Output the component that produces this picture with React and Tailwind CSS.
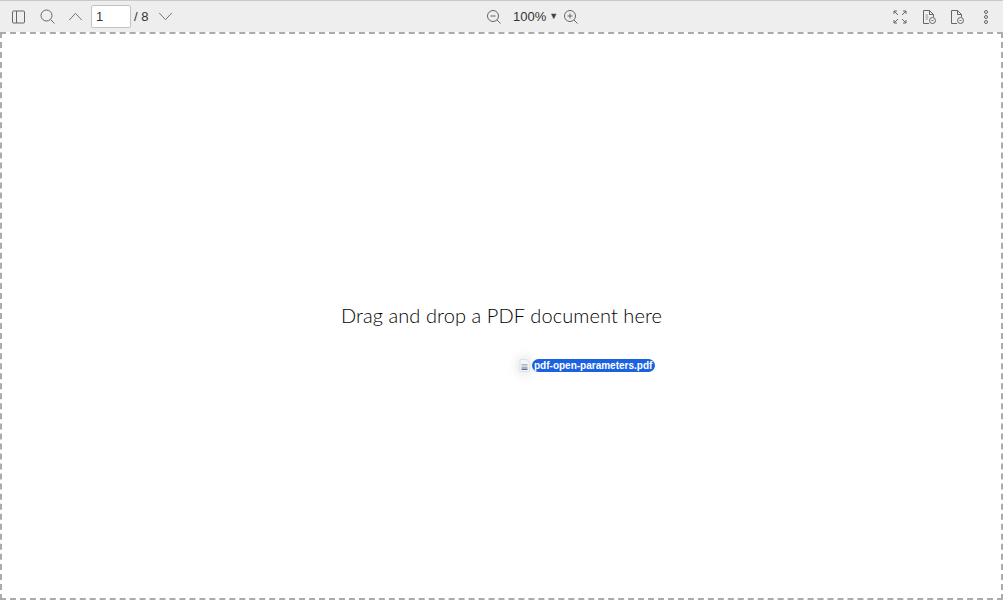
import React from 'react';

const sans = "font-['Liberation_Sans',sans-serif]";

const Toolbar = () => (
  <div className={`h-[32px] shrink-0 flex items-center bg-[#eeeeee] border-t border-[#c9c9c9] text-[#333333] text-[13px] ${sans}`}>
    <div className="flex-1 flex items-center pl-[12px]">
      <svg viewBox="0 0 14 14" fill="none" stroke="#666666" className="w-[14px] h-[14px]">
        <rect x="0.5" y="1" width="12" height="12" rx="1" />
        <path d="M4.5 1v12" />
      </svg>
      <svg viewBox="0 0 15 15" fill="none" stroke="#666666" className="w-[15px] h-[15px] ml-[14px]">
        <circle cx="6.5" cy="6.5" r="5.5" />
        <path d="M10.5 10.5l4 4" />
      </svg>
      <svg viewBox="0 0 16 10" fill="none" stroke="#666666" className="w-[15px] h-[9px] ml-[13px]">
        <path d="M1 9l7-7.5L15 9" />
      </svg>
      <div className="w-[40px] h-[23px] ml-[8px] bg-white border border-[#c4c4c4] rounded-[2px] flex items-center pl-[4px] text-[13px]">1</div>
      <span className="ml-[3px] text-[13px]">/ 8</span>
      <svg viewBox="0 0 16 10" fill="none" stroke="#666666" className="w-[15px] h-[9px] ml-[10px]">
        <path d="M1 1l7 7.5L15 1" />
      </svg>
    </div>

    <div className="flex items-center absolute left-[486px]">
      <svg viewBox="0 0 15 15" fill="none" stroke="#666666" className="w-[15px] h-[15px]">
        <circle cx="7" cy="7" r="5.5" />
        <path d="M4.5 7h5M11 11l3.5 3.5" />
      </svg>
      <span className="ml-[12px] text-[13px]">100%</span>
      <span className="ml-[3px] text-[9px] text-[#444444]">▼</span>
      <svg viewBox="0 0 15 15" fill="none" stroke="#666666" className="w-[15px] h-[15px] ml-[5px]">
        <circle cx="7" cy="7" r="5.5" />
        <path d="M4.5 7h5M7 4.5v5M11 11l3.5 3.5" />
      </svg>
    </div>

    <div className="flex items-center pr-[13px]">
      <svg viewBox="0 0 16 16" fill="none" stroke="#666666" className="w-[16px] h-[16px]">
        <path d="M2 2l4 4M2 2h3M2 2v3M14 2l-4 4M14 2h-3M14 2v3M2 14l4-4M2 14h3M2 14v-3M14 14l-4-4M14 14h-3M14 14v-3" />
      </svg>
      <svg viewBox="0 0 16 16" fill="none" stroke="#666666" className="w-[16px] h-[16px] ml-[13px]">
        <path d="M8 14.5H2.5v-13h6l4 4V8" />
        <path d="M8.5 1.5v4h4" />
        <path d="M4.5 6h2.5M4.5 8h3M4.5 10h2.5" stroke="#999999" />
        <circle cx="11.5" cy="11.5" r="3" />
        <path d="M10.5 11l1 1 1-1" />
      </svg>
      <svg viewBox="0 0 16 16" fill="none" stroke="#666666" className="w-[16px] h-[16px] ml-[12px]">
        <path d="M8 14.5H2.5v-13h6l4 4V8" />
        <path d="M8.5 1.5v4h4" />
        <circle cx="11.5" cy="11.5" r="3" />
        <path d="M10.5 12l1-1 1 1" />
      </svg>
      <svg viewBox="0 0 8 16" fill="none" stroke="#666666" className="w-[8px] h-[16px] ml-[17px]">
        <circle cx="4" cy="3" r="1.5" />
        <circle cx="4" cy="8" r="1.5" />
        <circle cx="4" cy="13" r="1.5" />
      </svg>
    </div>
  </div>
);

const DragGhost = () => (
  <div className={`absolute left-[519px] top-[359px] flex items-center ${sans}`}>
    <svg viewBox="0 0 11 13" className="w-[11px] h-[13px] drop-shadow-[0_0_6px_rgba(0,0,0,0.2)]">
      <path d="M1 .5h6.5l3 3v9H1z" fill="#f4f5f7" stroke="#d6d6d6" strokeWidth="0.6" />
      <path d="M2.5 5.5h6M2.5 7h6" stroke="#9aa3b2" strokeWidth="0.8" />
      <path d="M2.5 9h6M2.5 10.5h6" stroke="#5b6fa0" strokeWidth="1" />
    </svg>
    <div className="ml-[2px] h-[13px] w-[123px] rounded-full bg-[#1a62e2] text-white text-[10px] font-bold leading-[13px] pl-[2px] whitespace-nowrap overflow-hidden">
      pdf-open-parameters.pdf
    </div>
  </div>
);

export default function App() {
  return (
    <div className="relative w-[1003px] h-[600px] flex flex-col bg-white overflow-hidden">
      <Toolbar />
      <div className="flex-1 border-2 border-dashed border-[#ababab] flex items-center justify-center">
        <p className="font-['Lato',sans-serif] font-light text-[20px] text-black tracking-[0.09px] mt-[-3px]">Drag and drop a PDF document here</p>
      </div>
      <DragGhost />
    </div>
  );
}
